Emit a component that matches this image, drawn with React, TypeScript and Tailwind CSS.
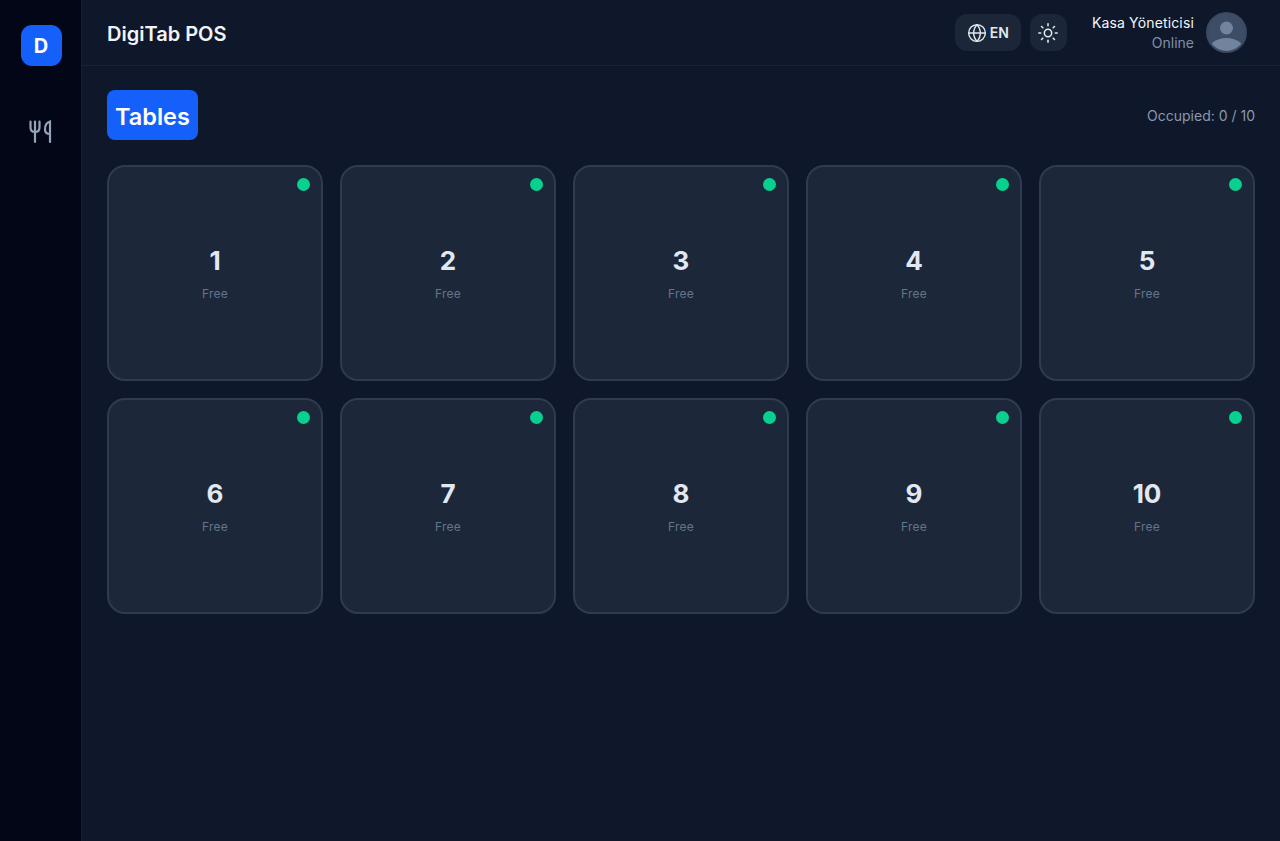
import { Globe, Sun } from "lucide-react";

const tables = [1, 2, 3, 4, 5, 6, 7, 8, 9, 10];

function TableCard({ num }: { num: number }) {
  return (
    <div className="relative flex h-[216px] flex-col items-center justify-center rounded-[18px] border-2 border-[#2e3b50] bg-[#1c283a] pt-[1px]">
      <span className="absolute right-[11px] top-[11px] h-[13px] w-[13px] rounded-full bg-[#08d18f]" />
      <div className="text-[26px] font-bold leading-[32px] text-[#e2e8f2]">{num}</div>
      <div className="mt-[9px] text-[12px] leading-[16px] tracking-[0.2px] text-[#64748b]">Free</div>
    </div>
  );
}

function App() {
  return (
    <div className="flex h-[841px] w-[1280px] overflow-hidden bg-[#0f172a] font-['Inter',sans-serif]">
      <aside className="flex w-[82px] shrink-0 flex-col items-center border-r border-[#141d30] bg-[#020617] pl-[1px] pt-[25px]">
        <div className="flex h-[41px] w-[41px] items-center justify-center rounded-[11px] bg-[#1560fb] text-[20px] font-bold text-white">
          D
        </div>
        <svg className="mt-[53px]" width="24" height="26" viewBox="0 0 24 26" fill="none" stroke="#94a3b8" strokeWidth="2.2" strokeLinecap="round">
          <path d="M1.500 2.500v6c0 3 1.500 4.500 4.500 4.500s4.500-1.500 4.500-4.500v-6" />
          <path d="M6 2.500V23" />
          <path d="M21 23V2.500c-3.500 1-5 3.500-5 8 0 3 1.500 4.500 5 4.500" />
        </svg>
      </aside>
      <div className="flex min-w-0 flex-1 flex-col">
        <header className="flex h-[66px] items-center justify-between border-b border-[#1a2436] pl-[25px] pr-[33px]">
          <h1 className="mt-[2px] text-[20px] font-semibold text-[#f1f5f9]">DigiTab POS</h1>
          <div className="flex items-center">
            <button className="flex h-[37px] items-center gap-[3px] rounded-[12px] bg-[#1b2638] pl-[12px] pr-[12px] text-[14px] font-semibold text-[#e2e8f0]">
              <Globe size={20} strokeWidth={1.7} />
              EN
            </button>
            <button className="ml-[9px] flex h-[37px] w-[37px] items-center justify-center rounded-[12px] bg-[#1b2638] text-[#e2e8f0]">
              <Sun size={22} strokeWidth={1.7} />
            </button>
            <div className="ml-[25px] text-right">
              <div className="text-[14px] leading-[20px] tracking-[0.15px] text-[#f1f5f9]">Kasa Yöneticisi</div>
              <div className="text-[14px] leading-[20px] text-[#8090a8]">Online</div>
            </div>
            <div className="ml-[12px] h-[41px] w-[41px] overflow-hidden rounded-full border-2 border-[#3a4a62] bg-[#3d4d66]">
              <svg viewBox="0 0 37 37" width="37" height="37">
                <circle cx="18.500" cy="14" r="6.500" fill="#72839e" />
                <ellipse cx="18.500" cy="37" rx="18" ry="13" fill="#72839e" />
              </svg>
            </div>
          </div>
        </header>
        <main className="flex-1 pl-[25px] pr-[25px] pt-[24px]">
          <div className="mb-[25px] flex items-center justify-between">
            <h2 className="flex h-[50px] items-center rounded-[8px] bg-[#1560fb] px-[8px] pt-[3px] text-[23.500px] font-semibold text-white">
              Tables
            </h2>
            <span className="text-[14px] text-[#8a99ae]">Occupied: 0 / 10</span>
          </div>
          <div className="grid grid-cols-5 gap-[17px]">
            {tables.map((n) => (
              <TableCard key={n} num={n} />
            ))}
          </div>
        </main>
      </div>
    </div>
  );
}

export default App;
